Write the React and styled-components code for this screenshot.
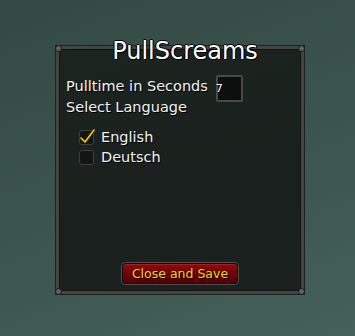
import React from 'react';
import styled, { createGlobalStyle } from 'styled-components';

const GlobalStyle = createGlobalStyle`
  html, body {
    margin: 0;
    padding: 0;
    width: 100%;
    height: 100%;
  }
  body {
    background: linear-gradient(160deg, #324a43 0%, #3b544d 50%, #45605a 100%);
    font-family: "DejaVu Sans", "Liberation Sans", sans-serif;
  }
`;

const Page = styled.div`
  width: 355px;
  height: 336px;
  padding: 46px 0 0 56px;
  box-sizing: border-box;
`;

const Frame = styled.div`
  position: relative;
  width: 248px;
  height: 248px;
  box-sizing: border-box;
  border: 3px solid #424542;
  box-shadow: 0 0 0 1px #1e211f, inset 0 0 0 1px #101311;
  background: linear-gradient(165deg, #1c2420 0%, #19201d 60%, #1a211e 100%);
  display: flex;
  flex-direction: column;
`;

const Corner = styled.span`
  position: absolute;
  width: 5px;
  height: 5px;
  border-radius: 50%;
  background: #5e615e;
  border: 1px solid #1a1a1a;
  ${(p) => (p.top ? 'top: -4px;' : 'bottom: -4px;')}
  ${(p) => (p.left ? 'left: -4px;' : 'right: -4px;')}
`;

const Title = styled.h1`
  margin: -11px 0 0 10px;
  font-size: 24px;
  line-height: 26px;
  font-weight: normal;
  text-align: center;
  color: #ffffff;
  text-shadow: 1px 1px 0 #000, -1px 0 0 #000, 0 -1px 0 #000, 1px 0 0 #000;
`;

const Settings = styled.div`
  display: flex;
  align-items: flex-start;
  margin: 12px 0 0 7px;
`;

const Labels = styled.div`
  display: flex;
  flex-direction: column;
`;

const Label = styled.span`
  font-size: 14.5px;
  line-height: 21px;
  color: #f2f2f2;
  text-shadow: 1px 1px 0 #000;
  white-space: nowrap;
`;

const EditBox = styled.div`
  margin: -1px 0 0 8px;
  width: 27px;
  height: 27px;
  box-sizing: border-box;
  border: 2px solid #474a47;
  border-radius: 2px;
  background: #0c0f0d;
  display: flex;
  align-items: center;
  font-size: 11px;
  color: #ffffff;
  text-indent: -2px;
  line-height: 1;
  text-shadow: 1px 1px 0 #000;
`;

const Options = styled.div`
  display: flex;
  flex-direction: column;
  gap: 4px;
  margin: 11px 0 0 20px;
`;

const Option = styled.label`
  display: flex;
  align-items: center;
  gap: 7px;
  font-size: 14.5px;
  color: #f2f2f2;
  text-shadow: 1px 1px 0 #000;
`;

const Box = styled.span`
  position: relative;
  width: 15px;
  height: 15px;
  box-sizing: border-box;
  border: 1px solid #3c3f3c;
  border-radius: 3px;
  background: #111513;
  flex-shrink: 0;
`;

const Check = styled.svg`
  position: absolute;
  left: -1px;
  top: -3px;
`;

const Footer = styled.div`
  margin-top: auto;
  padding-bottom: 7px;
  display: flex;
  justify-content: center;
`;

const SaveButton = styled.button`
  width: 116px;
  height: 21px;
  box-sizing: border-box;
  border: 1px solid #0c0c0c;
  border-radius: 4px;
  box-shadow: 0 0 0 1px #4d4d4d, inset 0 1px 0 #a32020;
  background: linear-gradient(#8a0e0e, #6a0303 60%, #520000);
  color: #ffd100;
  font-family: "DejaVu Sans", "Liberation Sans", sans-serif;
  font-size: 12.5px;
  padding: 0;
  text-shadow: 1px 1px 0 #000;
`;

const CheckMark = () => (
  <Check width="17" height="17" viewBox="0 0 17 17">
    <path d="M2 10 L6 14 L15 2" fill="none" stroke="#2a2000" strokeWidth="3" strokeLinejoin="round" strokeLinecap="round" />
    <path d="M2 10 L6 14 L15 2" fill="none" stroke="#f3c516" strokeWidth="1.6" strokeLinejoin="round" strokeLinecap="round" />
  </Check>
);

const LanguageOption = ({ name, checked }) => (
  <Option>
    <Box>{checked && <CheckMark />}</Box>
    {name}
  </Option>
);

const App = () => (
  <Page>
    <GlobalStyle />
    <Frame>
      <Corner top left />
      <Corner top />
      <Corner left />
      <Corner />
      <Title>PullScreams</Title>
      <Settings>
        <Labels>
          <Label>Pulltime in Seconds</Label>
          <Label>Select Language</Label>
        </Labels>
        <EditBox>7</EditBox>
      </Settings>
      <Options>
        <LanguageOption name="English" checked />
        <LanguageOption name="Deutsch" />
      </Options>
      <Footer>
        <SaveButton type="button">Close and Save</SaveButton>
      </Footer>
    </Frame>
  </Page>
);

export default App;
